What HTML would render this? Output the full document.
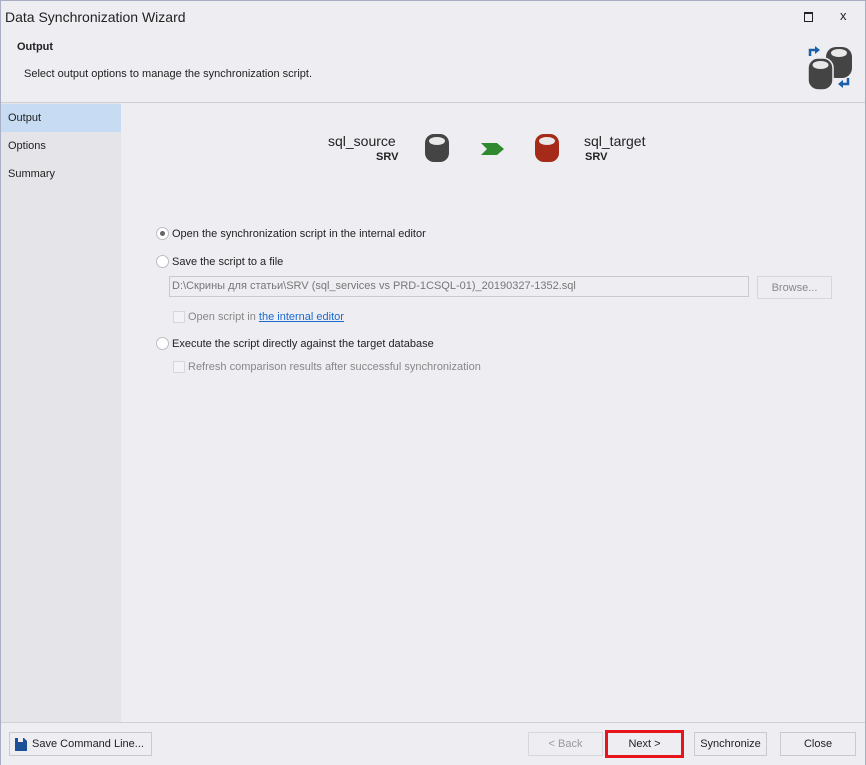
<!DOCTYPE html>
<html><head><meta charset="utf-8"><style>
*{margin:0;padding:0;box-sizing:border-box}
body{width:866px;height:765px;background:#eeedf2;font-family:"Liberation Sans",sans-serif;font-size:11px;color:#222;position:relative;overflow:hidden}
.abs{position:absolute;white-space:nowrap}
.win{position:absolute;left:0;top:0;width:866px;height:765px;border:1px solid #a9aec4;border-bottom:none}
.btn{position:absolute;height:24px;border:1px solid #c9c9cf;background:#eeedf2;text-align:center;line-height:22px;font-size:11px}
.radio{position:absolute;width:13px;height:13px;border-radius:50%;border:1px solid #bdbdc4;background:#fff}
.chk{position:absolute;width:12px;height:12px;border:1px solid #d6d6dc;background:#f3f3f6}
</style></head><body>
<div class="win"></div>
<div class="abs" style="left:5px;top:9px;font-size:14px;color:#222">Data Synchronization Wizard</div>
<div class="abs" style="left:804px;top:12px;width:9px;height:10px;border:1.5px solid #222;border-top-width:2px"></div>
<div class="abs" style="left:840px;top:8px;font-size:13px">x</div>
<div class="abs" style="left:17px;top:41px;font-weight:bold;font-size:11px">Output</div>
<div class="abs" style="left:24px;top:68px">Select output options to manage the synchronization script.</div>
<svg class="abs" style="left:806px;top:45px" width="48" height="47" viewBox="0 0 48 47">
<rect x="20" y="2" width="26" height="31" rx="10" fill="#444"/><ellipse cx="33" cy="8" rx="8" ry="4" fill="#e8e8e8"/>
<rect x="2" y="13" width="25" height="32" rx="10" fill="#444" stroke="#eeedf2" stroke-width="1.5"/><ellipse cx="14.5" cy="20" rx="8" ry="4" fill="#e8e8e8"/>
<path d="M4 11 V5 H10" stroke="#1b5fa8" stroke-width="2.5" fill="none"/><path d="M9 1 L14 5 L9 9Z" fill="#1b5fa8"/>
<path d="M42 33 V39 H36" stroke="#1b5fa8" stroke-width="2.5" fill="none"/><path d="M37 35 L32 39 L37 43Z" fill="#1b5fa8"/>
</svg>
<div class="abs" style="left:1px;top:102px;width:864px;height:1px;background:#cfcfd6"></div>
<div class="abs" style="left:1px;top:103px;width:120px;height:619px;background:#e4e4e9"></div>
<div class="abs" style="left:1px;top:104px;width:120px;height:28px;background:#c7dcf3"></div>
<div class="abs" style="left:8px;top:112px">Output</div>
<div class="abs" style="left:8px;top:140px">Options</div>
<div class="abs" style="left:8px;top:168px">Summary</div>
<div class="abs" style="left:328px;top:133px;font-size:14px">sql_source</div>
<div class="abs" style="left:376px;top:151px;font-weight:bold;font-size:11px">SRV</div>
<svg class="abs" style="left:424px;top:133px" width="26" height="30"><rect x="1" y="1" width="24" height="28" rx="9" fill="#444"/><ellipse cx="13" cy="8" rx="8" ry="4" fill="#e8e8e8"/></svg>
<svg class="abs" style="left:481px;top:143px" width="24" height="12"><path d="M0 0H16L23 6L16 12H0L6 6Z" fill="#2f8a2f"/></svg>
<svg class="abs" style="left:534px;top:133px" width="26" height="30"><rect x="1" y="1" width="24" height="28" rx="9" fill="#a52a17"/><ellipse cx="13" cy="8" rx="8" ry="4" fill="#e8e8e8"/></svg>
<div class="abs" style="left:584px;top:133px;font-size:14px">sql_target</div>
<div class="abs" style="left:585px;top:151px;font-weight:bold;font-size:11px">SRV</div>
<div class="radio" style="left:156px;top:227px"><div style="position:absolute;left:3px;top:3px;width:5px;height:5px;border-radius:50%;background:#666"></div></div>
<div class="abs" style="left:172px;top:228px">Open the synchronization script in the internal editor</div>
<div class="radio" style="left:156px;top:255px"></div>
<div class="abs" style="left:172px;top:256px">Save the script to a file</div>
<div class="abs" style="left:169px;top:276px;width:580px;height:21px;border:1px solid #c9c9cf;background:#eeedf2;color:#777;padding:3px 2px;font-size:11px">D:\Скрины для статьи\SRV (sql_services vs PRD-1CSQL-01)_20190327-1352.sql</div>
<div class="btn" style="left:757px;top:276px;width:75px;height:23px;color:#888;border-color:#d6d6dc">Browse...</div>
<div class="chk" style="left:173px;top:311px"></div>
<div class="abs" style="left:188px;top:311px;color:#888">Open script in <span style="color:#1a6ad1;text-decoration:underline">the internal editor</span></div>
<div class="radio" style="left:156px;top:337px"></div>
<div class="abs" style="left:172px;top:338px">Execute the script directly against the target database</div>
<div class="chk" style="left:173px;top:361px"></div>
<div class="abs" style="left:188px;top:361px;color:#888">Refresh comparison results after successful synchronization</div>
<div class="abs" style="left:1px;top:722px;width:864px;height:1px;background:#d0d0d8"></div>
<div class="btn" style="left:9px;top:732px;width:143px"><svg style="position:absolute;left:5px;top:5px" width="12" height="13"><path d="M0 0H3V4H8V0H9L12 3V13H0Z" fill="#1b4f96"/></svg><span style="margin-left:15px">Save Command Line...</span></div>
<div class="btn" style="left:528px;top:732px;width:75px;color:#999;border-color:#d6d6dc">&lt; Back</div>
<div class="btn" style="left:605px;top:730px;width:79px;height:28px;border:3px solid #e8141c;line-height:22px">Next &gt;</div>
<div class="btn" style="left:694px;top:732px;width:73px">Synchronize</div>
<div class="btn" style="left:780px;top:732px;width:76px">Close</div>
</body></html>
